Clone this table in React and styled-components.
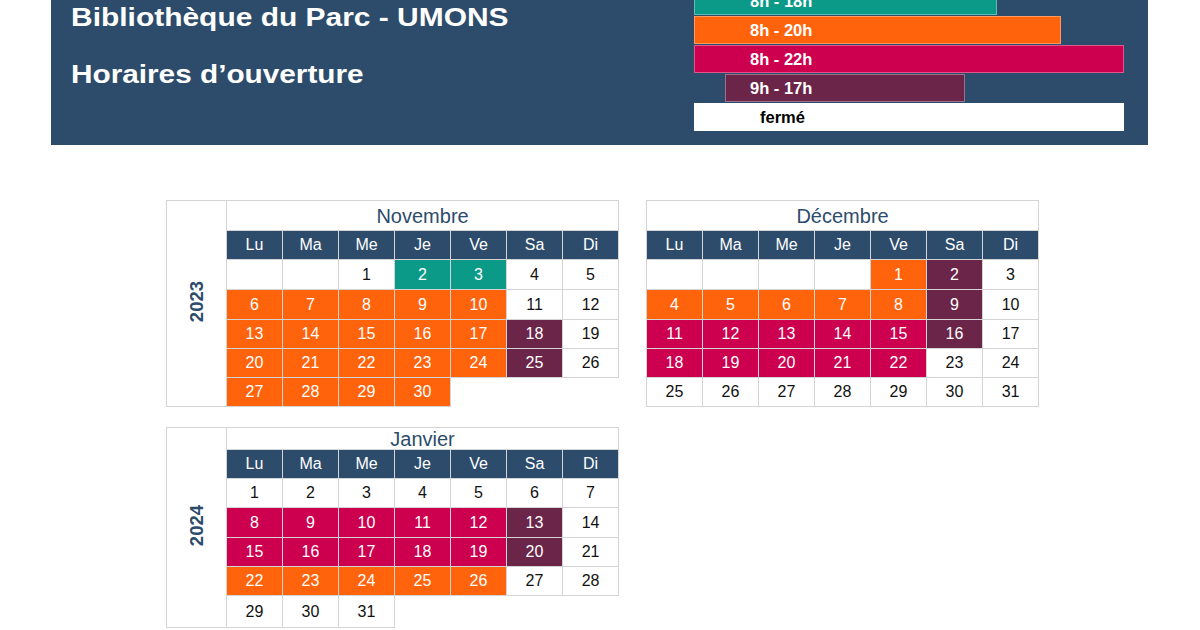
import React from "react";
import styled, { createGlobalStyle } from "styled-components";

const NAVY = "#2d4c6b";
const FILL = {
  w: "#ffffff",
  t: "#0b9a88",
  o: "#ff630b",
  m: "#cc004e",
  p: "#6a2548",
};

const GlobalStyle = createGlobalStyle`
  html, body {
    margin: 0;
    padding: 0;
    background: #ffffff;
  }
  body {
    font-family: "Liberation Sans", Arial, sans-serif;
    overflow: hidden;
  }
`;

const Page = styled.div`
  width: 1200px;
  height: 630px;
  overflow: hidden;
`;

const Banner = styled.header`
  display: flex;
  justify-content: space-between;
  margin: -20px 52px 0 51px;
  padding: 7px 24px 14px 20px;
  background: ${NAVY};
`;

const Titles = styled.div`
  padding-top: 13px;
  color: #ffffff;
`;

const Title = styled.h1`
  margin: 0;
  font-size: 26.5px;
  line-height: 34px;
  font-weight: bold;
  white-space: nowrap;
  transform: scaleX(1.13);
  transform-origin: left center;
`;

const Subtitle = styled.h2`
  margin: 23px 0 0;
  font-size: 25px;
  line-height: 34px;
  font-weight: bold;
  white-space: nowrap;
  transform: scaleX(1.19);
  transform-origin: left center;
`;

const Legend = styled.div`
  display: flex;
  flex-direction: column;
  gap: 1px;
  width: 430px;
`;

const Bar = styled.div`
  box-sizing: border-box;
  display: flex;
  align-items: center;
  height: 28px;
  width: ${(p) => p.$w}px;
  margin-left: ${(p) => p.$offset || 0}px;
  padding-left: ${(p) => p.$pad}px;
  background: ${(p) => FILL[p.$c]};
  color: ${(p) => (p.$c === "w" ? "#000000" : "#ffffff")};
  border: 1px solid rgba(255, 255, 255, 0.35);
  font-size: 16.5px;
  font-weight: bold;
`;

const Calendars = styled.main`
  display: grid;
  grid-template-columns: 452px 392px;
  column-gap: 28px;
  row-gap: 20px;
  align-items: start;
  padding: 55px 0 0 166px;
`;

const Table = styled.table`
  border-collapse: collapse;
  table-layout: fixed;
  width: ${(p) => p.$w}px;
  font-family: "Liberation Sans", Arial, sans-serif;
`;

const YearCell = styled.td`
  padding: 0;
  border: 1px solid #d4d4d4;
  text-align: center;
  vertical-align: middle;
`;

const YearLabel = styled.span`
  display: inline-block;
  writing-mode: vertical-rl;
  transform: rotate(180deg);
  color: ${NAVY};
  font-size: 18.5px;
  font-weight: bold;
`;

const MonthCell = styled.td`
  height: ${(p) => p.$h}px;
  padding: 0;
  border: 1px solid #d4d4d4;
  color: ${NAVY};
  font-size: 20px;
  line-height: 18px;
  text-align: center;
`;

const DayName = styled.th`
  height: ${(p) => p.$h}px;
  padding: 0;
  border: 1px solid #d4d4d4;
  background: ${NAVY};
  color: #ffffff;
  font-size: 16px;
  font-weight: normal;
  line-height: 16px;
  text-align: center;
`;

const Day = styled.td`
  padding: 0;
  border: ${(p) => (p.$blank ? "none" : "1px solid #d4d4d4")};
  background: ${(p) => (p.$blank ? "transparent" : FILL[p.$c])};
  color: ${(p) => (p.$c === "w" ? "#111111" : "#ffffff")};
  font-size: 16px;
  line-height: 16px;
  text-align: center;
`;

const WeekRow = styled.tr`
  height: ${(p) => p.$h}px;
`;

const DAYS = ["Lu", "Ma", "Me", "Je", "Ve", "Sa", "Di"];

// each week: 7 entries "num:colour", "" = empty bordered cell, "-" = blank
const novembre = [
  ["", "", "1:w", "2:t", "3:t", "4:w", "5:w"],
  ["6:o", "7:o", "8:o", "9:o", "10:o", "11:w", "12:w"],
  ["13:o", "14:o", "15:o", "16:o", "17:o", "18:p", "19:w"],
  ["20:o", "21:o", "22:o", "23:o", "24:o", "25:p", "26:w"],
  ["27:o", "28:o", "29:o", "30:o", "-", "-", "-"],
];

const decembre = [
  ["", "", "", "", "1:o", "2:p", "3:w"],
  ["4:o", "5:o", "6:o", "7:o", "8:o", "9:p", "10:w"],
  ["11:m", "12:m", "13:m", "14:m", "15:m", "16:p", "17:w"],
  ["18:m", "19:m", "20:m", "21:m", "22:m", "23:w", "24:w"],
  ["25:w", "26:w", "27:w", "28:w", "29:w", "30:w", "31:w"],
];

const janvier = [
  ["1:w", "2:w", "3:w", "4:w", "5:w", "6:w", "7:w"],
  ["8:m", "9:m", "10:m", "11:m", "12:m", "13:p", "14:w"],
  ["15:m", "16:m", "17:m", "18:m", "19:m", "20:p", "21:w"],
  ["22:o", "23:o", "24:o", "25:o", "26:o", "27:w", "28:w"],
  ["29:w", "30:w", "31:w", "-", "-", "-", "-"],
];

function Month({ name, year, weeks, titleH, headH, rowH }) {
  const width = year ? 452 : 392;
  return (
    <Table $w={width}>
      <colgroup>
        {year && <col style={{ width: 60 }} />}
        {DAYS.map((d) => (
          <col key={d} style={{ width: 56 }} />
        ))}
      </colgroup>
      <tbody>
        <tr>
          {year && (
            <YearCell rowSpan={2 + weeks.length}>
              <YearLabel>{year}</YearLabel>
            </YearCell>
          )}
          <MonthCell colSpan={7} $h={titleH}>{name}</MonthCell>
        </tr>
        <tr>
          {DAYS.map((d) => (
            <DayName key={d} $h={headH}>{d}</DayName>
          ))}
        </tr>
        {weeks.map((week, i) => (
          <WeekRow key={i} $h={rowH[i]}>
            {week.map((cell, j) => {
              if (cell === "-") return <Day key={j} $blank />;
              if (cell === "") return <Day key={j} $c="w" />;
              const [num, c] = cell.split(":");
              return (
                <Day key={j} $c={c}>
                  {num}
                </Day>
              );
            })}
          </WeekRow>
        ))}
      </tbody>
    </Table>
  );
}

export default function App() {
  return (
    <Page>
      <GlobalStyle />
      <Banner>
        <Titles>
          <Title>Bibliothèque du Parc - UMONS</Title>
          <Subtitle>Horaires d’ouverture</Subtitle>
        </Titles>
        <Legend>
          <Bar $c="t" $w={303} $pad={55}>8h - 18h</Bar>
          <Bar $c="o" $w={367} $pad={55}>8h - 20h</Bar>
          <Bar $c="m" $w={430} $pad={55}>8h - 22h</Bar>
          <Bar $c="p" $w={240} $offset={31} $pad={24}>9h - 17h</Bar>
          <Bar $c="w" $w={430} $pad={65}>fermé</Bar>
        </Legend>
      </Banner>

      <Calendars>
        <Month
          name="Novembre"
          year="2023"
          weeks={novembre}
          titleH={29}
          headH={28}
          rowH={[30, 30, 29, 29, 29]}
        />
        <Month
          name="Décembre"
          weeks={decembre}
          titleH={29}
          headH={28}
          rowH={[30, 30, 29, 29, 29]}
        />
        <Month
          name="Janvier"
          year="2024"
          weeks={janvier}
          titleH={21}
          headH={28}
          rowH={[29, 30, 29, 29, 32]}
        />
      </Calendars>
    </Page>
  );
}
